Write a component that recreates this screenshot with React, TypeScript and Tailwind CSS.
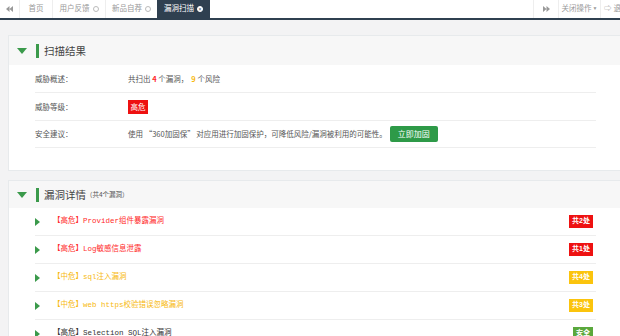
import React from "react";

const font = { fontFamily: '"Liberation Sans", "Noto Sans CJK SC", sans-serif' };
const cjk = { fontFamily: '"Noto Sans CJK SC", "Liberation Sans", sans-serif' };
const mono = { fontFamily: '"Liberation Mono", "Noto Sans CJK SC", monospace' };

function DoubleArrow({ dir }: { dir: "left" | "right" }) {
  return (
    <svg width="7" height="6" viewBox="0 0 7 6" className={dir === "left" ? "rotate-180" : ""}>
      <path d="M0 0 L3.5 3 L0 6 Z M3.5 0 L7 3 L3.5 6 Z" fill="#999" />
    </svg>
  );
}

function TriDown() {
  return (
    <svg width="10" height="6" viewBox="0 0 10 6">
      <path d="M0 0 H10 L5 6 Z" fill="#3b9a4b" />
    </svg>
  );
}

function TriRight() {
  return (
    <svg width="5" height="8" viewBox="0 0 5 8">
      <path d="M0 0 L5 4 L0 8 Z" fill="#3b9a4b" />
    </svg>
  );
}

function CloseDot({ light }: { light?: boolean }) {
  return (
    <span
      className={`ml-[3px] inline-flex h-[6px] w-[6px] items-center justify-center rounded-full border ${
        light ? "border-white bg-white" : "border-[#bbb]"
      }`}
    >
      {light && <span className="text-[5px] leading-none text-[#2f4050]">×</span>}
    </span>
  );
}

const items = [
  { lvl: "【高危】", name: "Provider组件暴露漏洞", color: "text-[#ff2a2a]", badge: "共2处", bg: "bg-[#ee1111]" },
  { lvl: "【高危】", name: "Log敏感信息泄露", color: "text-[#ff2a2a]", badge: "共1处", bg: "bg-[#ee1111]" },
  { lvl: "【中危】", name: "sql注入漏洞", color: "text-[#f7b90f]", badge: "共4处", bg: "bg-[#fbc40d]" },
  { lvl: "【中危】", name: "web https校验错误忽略漏洞", color: "text-[#f7b90f]", badge: "共3处", bg: "bg-[#fbc40d]" },
  { lvl: "【高危】", name: "Selection SQL注入漏洞", color: "text-[#333]", badge: "安全", bg: "bg-[#5aa83c]" },
];

export default function App() {
  return (
    <div className="h-[336px] w-[620px] overflow-hidden bg-[#f3f3f4]" style={font}>
      <div className="w-[660px]">
        {/* Top tabs */}
        <div className="flex h-[20px] items-stretch border-b-2 border-[#2f4050] bg-white text-[7.5px] text-[#999]">
          <div className="flex w-[20px] items-center justify-center border-r border-[#eee]">
            <DoubleArrow dir="left" />
          </div>
          <div className="flex w-[32px] items-center justify-center">首页</div>
          <div className="flex w-[53px] items-center justify-center border-l border-[#eee]">
            用户反馈
            <CloseDot />
          </div>
          <div className="flex w-[52px] items-center justify-center border-l border-[#eee]">
            新品自荐
            <CloseDot />
          </div>
          <div className="flex w-[53px] items-center justify-center bg-[#2f4050] text-white">
            漏洞扫描
            <CloseDot light />
          </div>
          <div className="flex-1" />
          <div className="flex w-[25px] items-center justify-center border-l border-[#eee]">
            <DoubleArrow dir="right" />
          </div>
          <div className="flex w-[42px] items-center justify-center border-l border-[#eee]">
            关闭操作<span className="ml-[1px] text-[5px]">▼</span>
          </div>
          <div className="flex w-[60px] items-center border-l border-[#eee] pl-[3px]">
            <span className="mr-[2px]">⇨</span>退出
          </div>
        </div>

        <div className="pl-[8px] pt-[15px]">
          {/* Panel 1 */}
          <div className="w-[640px] border border-[#e7eaec] bg-white">
            <div className="flex h-[29px] items-center bg-[#f7f7f7] pl-[8px]">
              <TriDown />
              <span className="ml-[9px] h-[14px] w-[3px] bg-[#3b9a4b]" />
              <span className="ml-[5px] text-[10.5px] text-[#444]" style={cjk}>扫描结果</span>
            </div>
            <div className="pb-[22px] pl-[26px] text-[7.5px] text-[#555]" style={cjk}>
              <div className="flex h-[28px] w-[561px] items-center border-b border-[#eee]">
                <span className="w-[93px]">威胁概述：</span>
                <span>
                  共扫出 <span className="font-bold text-[#ff2a2a]">4</span> 个漏洞，
                  <span className="ml-[3px] font-bold text-[#f7b90f]">9</span> 个风险
                </span>
              </div>
              <div className="flex h-[28px] w-[561px] items-center border-b border-[#eee]">
                <span className="w-[93px]">威胁等级：</span>
                <span className="flex h-[14px] w-[20px] items-center justify-center bg-[#ee1111] text-white">高危</span>
              </div>
              <div className="flex h-[27px] w-[561px] items-center border-b border-[#eee]">
                <span className="w-[93px]">安全建议：</span>
                <span>使用 “360加固保” 对应用进行加固保护，可降低风险/漏洞被利用的可能性。</span>
                <span className="ml-[3px] flex h-[16px] w-[48px] items-center justify-center rounded-[2px] bg-[#2e9a48] text-[8px] text-white">
                  立即加固
                </span>
              </div>
            </div>
          </div>

          {/* Panel 2 */}
          <div className="mt-[9px] w-[640px] border border-[#e7eaec] bg-white">
            <div className="flex h-[27px] items-center bg-[#f7f7f7] pl-[8px]">
              <TriDown />
              <span className="ml-[9px] h-[14px] w-[3px] bg-[#3b9a4b]" />
              <span className="ml-[5px] text-[10.5px] text-[#444]" style={cjk}>漏洞详情</span>
              <span className="text-[6.5px] text-[#555]" style={cjk}>（共4个漏洞）</span>
            </div>
            <div className="pl-[26px] text-[7.5px]" style={mono}>
              {items.map((it) => (
                <div key={it.name} className="flex h-[28px] w-[561px] items-center border-b border-[#eee] pr-[3px]">
                  <TriRight />
                  <span className={`ml-[13px] ${it.color}`}>
                    {it.lvl}
                    {it.name}
                  </span>
                  <span className="flex-1" />
                  <span
                    className={`flex h-[13px] items-center justify-center px-[3px] text-[7px] font-bold text-white ${it.bg}`}
                    style={font}
                  >
                    {it.badge}
                  </span>
                </div>
              ))}
            </div>
          </div>
        </div>
      </div>
    </div>
  );
}
